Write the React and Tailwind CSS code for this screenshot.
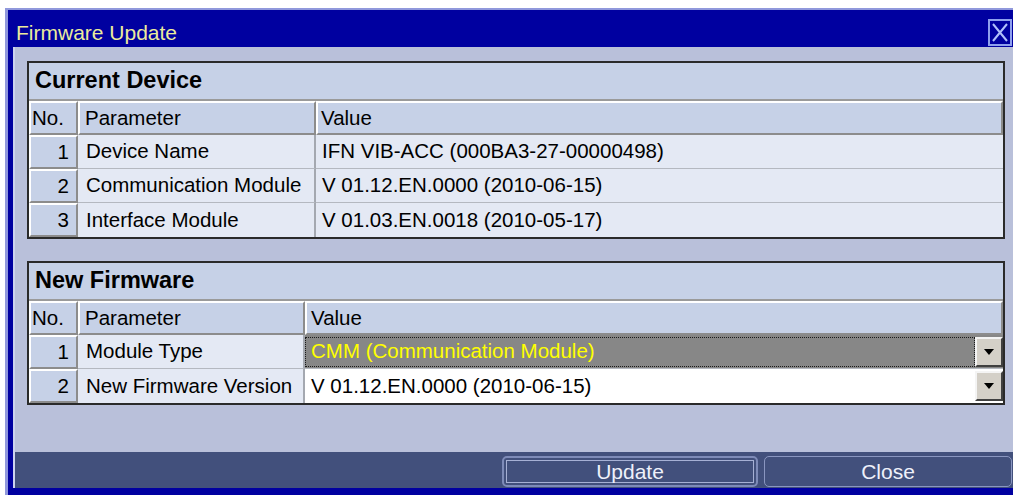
import React from "react";

const currentRows = [
  ["1", "Device Name", "IFN VIB-ACC (000BA3-27-00000498)"],
  ["2", "Communication Module", "V 01.12.EN.0000 (2010-06-15)"],
  ["3", "Interface Module", "V 01.03.EN.0018 (2010-05-17)"],
];

function CloseBox() {
  return (
    <svg width="24" height="27" viewBox="0 0 24 27" className="block">
      <rect x="1" y="1" width="22" height="25" fill="#0000a0" stroke="#8fa0ee" strokeWidth="2" />
      <path d="M5 5 L19 22 M19 5 L5 22" stroke="#b0c0fa" strokeWidth="2" />
    </svg>
  );
}

function RaisedCell({ className, children }) {
  return (
    <div
      className={`h-full flex items-center bg-[#c6d1e7] border-2 border-t-white border-l-white border-r-[#8c8c8c] border-b-[#8c8c8c] ${className}`}
    >
      {children}
    </div>
  );
}

function DropArrow() {
  return (
    <div className="w-[28px] h-[30px] shrink-0 bg-[#d4d0c8] border-2 border-t-[#f4f4f4] border-l-[#f4f4f4] border-r-[#404040] border-b-[#404040] flex items-center justify-center">
      <svg width="10" height="6" viewBox="0 0 10 6">
        <path d="M0 0 H10 L5 6 Z" fill="#000" />
      </svg>
    </div>
  );
}

function GridHeader({ title, paramClass, valuePad }) {
  return (
    <>
      <div className="h-[38px] bg-[#c6d1e7] border-b-2 border-[#9a9a9a] flex items-center pl-[6px] text-[23.5px] font-bold text-black">
        {title}
      </div>
      <div className="h-[34px] flex text-[20.5px] text-black">
        <RaisedCell className="w-[49px] pl-[1px]">No.</RaisedCell>
        <RaisedCell className={`${paramClass} pl-[5px]`}>Parameter</RaisedCell>
        <RaisedCell className={`flex-1 ${valuePad}`}>Value</RaisedCell>
      </div>
    </>
  );
}

function CurrentDevice() {
  return (
    <div className="border-2 border-[#2a2a2a] bg-[#e4e9f4]">
      <GridHeader title="Current Device" paramClass="w-[238px]" valuePad="pl-[3px]" />
      {currentRows.map(([no, param, value], i) => (
        <div key={no} className="h-[34px] flex text-[20.5px] text-black">
          <RaisedCell className="w-[49px] justify-end pr-[7px]">{no}</RaisedCell>
          <div
            className={`w-[238px] h-full flex items-center pl-[8px] border-r-2 border-[#a4a8b0] ${i < 2 ? "border-b border-b-[#b4b8c0]" : ""}`}
          >
            {param}
          </div>
          <div
            className={`flex-1 h-full flex items-center pl-[6px] ${i < 2 ? "border-b border-[#b4b8c0]" : ""}`}
          >
            {value}
          </div>
        </div>
      ))}
    </div>
  );
}

function NewFirmware() {
  return (
    <div className="border-2 border-[#2a2a2a] bg-[#e4e9f4]">
      <GridHeader title="New Firmware" paramClass="w-[227px]" valuePad="pl-[4px]" />
      <div className="h-[34px] flex text-[20.5px] text-black">
        <RaisedCell className="w-[49px] justify-end pr-[7px]">1</RaisedCell>
        <div className="w-[227px] h-full flex items-center pl-[8px] border-r-2 border-[#a4a8b0] border-b border-b-[#b4b8c0]">
          Module Type
        </div>
        <div className="flex-1 h-full flex items-center border-b border-[#b4b8c0] bg-[#878787]">
          <div className="flex-1 h-[30px] flex items-center pl-[5px] border border-dotted border-[#1a1a1a] text-[#ffff00]">
            CMM (Communication Module)
          </div>
          <DropArrow />
        </div>
      </div>
      <div className="h-[34px] flex text-[20.5px] text-black">
        <RaisedCell className="w-[49px] justify-end pr-[7px]">2</RaisedCell>
        <div className="w-[227px] h-full flex items-center pl-[8px] border-r-2 border-[#a4a8b0]">
          New Firmware Version
        </div>
        <div className="flex-1 h-full flex items-center bg-white">
          <div className="flex-1 pl-[6px]">V 01.12.EN.0000 (2010-06-15)</div>
          <DropArrow />
        </div>
      </div>
    </div>
  );
}

export default function App() {
  return (
    <div className="w-[1013px] h-[495px] bg-white pt-[8px] pl-[5px] overflow-hidden font-['Liberation_Sans',Arial,sans-serif]">
      <div className="h-full flex flex-col bg-[#0000a0] border-l-[3px] border-t-[2px] border-[#9098dc]">
        {/* title bar */}
        <div className="h-[37px] shrink-0 flex items-center justify-between pt-[7px] pl-[8px] pr-[1px]">
          <span className="text-[21px] leading-none text-[#ebeb9c]">Firmware Update</span>
          <CloseBox />
        </div>

        {/* client area */}
        <div className="flex-1 flex flex-col ml-[5px] border-l-[2px] border-[#cdd3ee] min-h-0">
          <div className="flex-1 bg-[#b9c0da] pt-[14px] pl-[12px] pr-[8px] flex flex-col gap-[22px]">
            <CurrentDevice />
            <NewFirmware />
          </div>

          {/* button bar */}
          <div className="h-[36px] shrink-0 bg-[#42507c] flex items-start pt-[4px] pl-[487px] gap-[6px]">
            <button className="w-[256px] h-[31px] rounded-[5px] border-2 border-[#7e8bb8] p-[2px] flex">
              <span className="flex-1 flex items-center justify-center border border-[#a6b0d4] text-[21px] leading-none text-[#eef0fa]">
                Update
              </span>
            </button>
            <button className="w-[248px] h-[31px] rounded-[5px] border border-[#8a96c0] flex items-center justify-center text-[21px] leading-none text-[#eef0fa]">
              Close
            </button>
          </div>
        </div>

        {/* bottom frame */}
        <div className="h-[7px] shrink-0" />
      </div>
    </div>
  );
}
